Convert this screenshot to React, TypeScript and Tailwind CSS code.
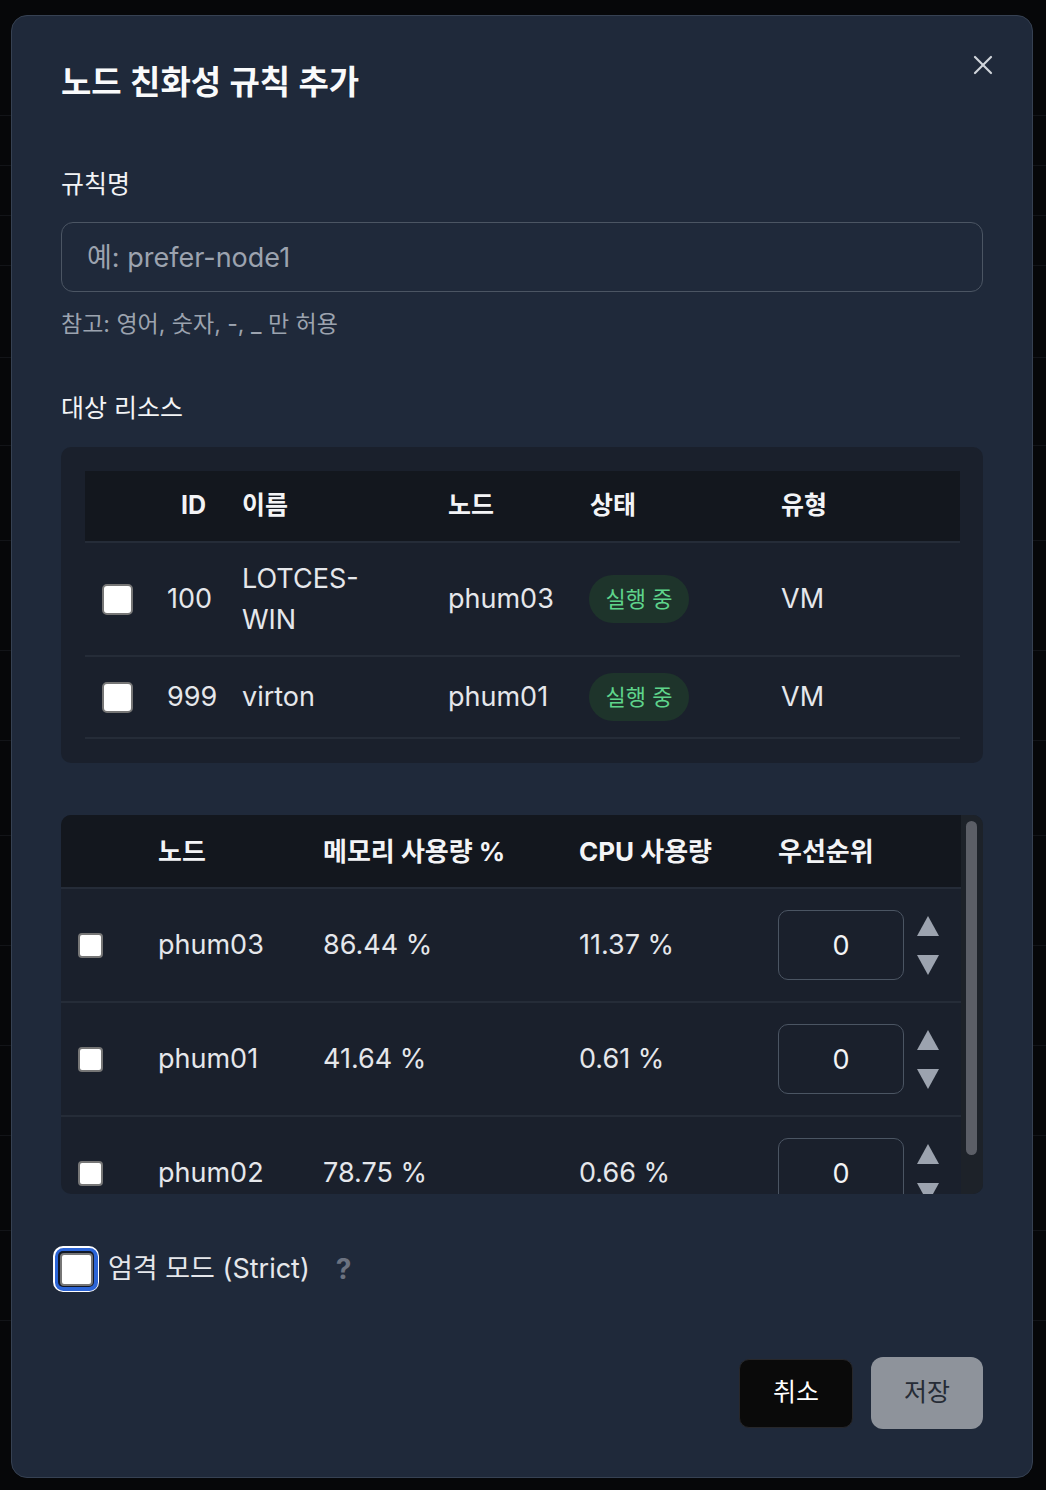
import { useState } from 'react';

const font = { fontFamily: 'Inter, "Noto Sans CJK KR", sans-serif' };

type Resource = { id: string; name: string; node: string; status: string; type: string; tall?: boolean };
type NodeRow = { node: string; mem: string; cpu: string; priority: number };

const resources: Resource[] = [
  { id: '100', name: 'LOTCES-WIN', node: 'phum03', status: '실행 중', type: 'VM', tall: true },
  { id: '999', name: 'virton', node: 'phum01', status: '실행 중', type: 'VM' },
];

const nodes: NodeRow[] = [
  { node: 'phum03', mem: '86.44 %', cpu: '11.37 %', priority: 0 },
  { node: 'phum01', mem: '41.64 %', cpu: '0.61 %', priority: 0 },
  { node: 'phum02', mem: '78.75 %', cpu: '0.66 %', priority: 0 },
];

const Box = ({ size }: { size: 'lg' | 'sm' }) => (
  <span
    className={`block bg-white border-2 border-[#767676] ${
      size === 'lg' ? 'w-[31px] h-[31px] rounded-[5px]' : 'w-[25px] h-[25px] rounded-[4px]'
    }`}
  />
);

const Spinner = () => (
  <div className="flex flex-col gap-[19px] ml-[13px]">
    <svg width="22" height="20" viewBox="0 0 22 20">
      <polygon points="11,0 22,20 0,20" fill="#9ca3af" />
    </svg>
    <svg width="22" height="20" viewBox="0 0 22 20">
      <polygon points="0,0 22,0 11,20" fill="#9ca3af" />
    </svg>
  </div>
);

const App = () => {
  const [ruleName, setRuleName] = useState('');

  return (
    <div className="relative h-[1490px] w-[1046px] bg-[#060709] overflow-hidden" style={font}>
      {/* faint page content behind the overlay */}
      <div className="flex flex-col pt-[115px]">
        {[50, 50, 50, 92, 88, 95, 110, 90, 95, 110, 100, 90, 95, 90, 90].map((h, i) => (
          <div key={i} className="border-t border-[#121418]" style={{ height: h }} />
        ))}
      </div>

      {/* Modal */}
      <div className="absolute left-[11px] top-[15px] w-[1022px] h-[1463px] rounded-[16px] border border-[#364152] bg-[#1f293a] px-[49px] pt-[46px]">
        <button className="absolute right-[39px] top-[39px] text-[#d1d5db]" aria-label="close">
          <svg width="20" height="20" viewBox="0 0 20 20" fill="none" stroke="currentColor" strokeWidth="2.2" strokeLinecap="round">
            <line x1="2" y1="2" x2="18" y2="18" />
            <line x1="18" y1="2" x2="2" y2="18" />
          </svg>
        </button>

        <h2 className="text-[33px] leading-[40px] font-semibold text-[#f9fafb]">노드 친화성 규칙 추가</h2>

        <label className="block mt-[66px] text-[25px] leading-[32px] text-[#f3f4f6]">규칙명</label>
        <input
          value={ruleName}
          onChange={(e) => setRuleName(e.target.value)}
          placeholder="예: prefer-node1"
          className="mt-[22px] block w-full h-[70px] rounded-[12px] border-[1.5px] border-[#4b5563] bg-transparent pl-[25px] text-[27px] text-[#e5e7eb] placeholder:text-[#9ca3af] outline-none"
        />
        <p className="mt-[18px] text-[23px] leading-[28px] text-[#9ca3af]">참고: 영어, 숫자, -, _ 만 허용</p>

        <label className="block mt-[54px] text-[25px] leading-[32px] text-[#f3f4f6]">대상 리소스</label>

        {/* Resources table */}
        <div className="mt-[23px] rounded-[10px] bg-[#1a202c] p-[24px] pr-[23px]">
          <div className="grid grid-cols-[72px_77px_206px_142px_191px_1fr] h-[72px] items-center bg-[#13171e] text-[25px] font-bold text-[#f3f4f6] border-b-2 border-[#252c38]">
            <div />
            <div className="pl-[24px]">ID</div>
            <div className="pl-[8px]">이름</div>
            <div className="pl-[8px]">노드</div>
            <div className="pl-[8px]">상태</div>
            <div className="pl-[8px]">유형</div>
          </div>
          {resources.map((r) => (
            <div
              key={r.id}
              className={`grid grid-cols-[72px_77px_206px_142px_191px_1fr] items-center border-b-2 border-[#252c38] text-[27px] text-[#e5e7eb] ${
                r.tall ? 'h-[114px]' : 'h-[82px]'
              }`}
            >
              <div className="pl-[17px]">
                <Box size="lg" />
              </div>
              <div className="pl-[10px]">{r.id}</div>
              <div className="pl-[8px]">
                <span className="inline-block max-w-[135px] leading-[41px]">{r.name}</span>
              </div>
              <div className="pl-[8px]">{r.node}</div>
              <div className="pl-[7px]">
                <span className="inline-flex items-center justify-center w-[100px] h-[48px] rounded-full bg-[#1e342b] text-[22px] text-[#5ed48b]">
                  {r.status}
                </span>
              </div>
              <div className="pl-[8px]">{r.type}</div>
            </div>
          ))}
        </div>

        {/* Nodes table */}
        <div className="mt-[52px] h-[379px] rounded-[10px] bg-[#1a202c] flex overflow-hidden">
          <div className="flex-1 overflow-hidden">
            <div className="grid grid-cols-[89px_165px_256px_199px_1fr] h-[74px] items-center bg-[#13171e] text-[26px] font-bold text-[#f3f4f6] border-b-2 border-[#252c38]">
              <div />
              <div className="pl-[8px]">노드</div>
              <div className="pl-[8px]">메모리 사용량 %</div>
              <div className="pl-[8px]">CPU 사용량</div>
              <div className="pl-[8px]">우선순위</div>
            </div>
            {nodes.map((n) => (
              <div
                key={n.node}
                className="grid grid-cols-[89px_165px_256px_199px_1fr] h-[114px] items-center border-b-2 border-[#252c38] text-[27px] text-[#e5e7eb]"
              >
                <div className="pl-[17px]">
                  <Box size="sm" />
                </div>
                <div className="pl-[8px]">{n.node}</div>
                <div className="pl-[8px]">{n.mem}</div>
                <div className="pl-[8px]">{n.cpu}</div>
                <div className="pl-[8px] flex items-center">
                  <input
                    readOnly
                    value={n.priority}
                    className="w-[126px] h-[70px] rounded-[10px] border-[1.5px] border-[#4b5563] bg-transparent text-center text-[27px] text-[#f3f4f6] outline-none"
                  />
                  <Spinner />
                </div>
              </div>
            ))}
          </div>
          {/* scrollbar */}
          <div className="w-[22px] bg-[#1d2229] pt-[6px] pl-[5px]">
            <div className="w-[11px] h-[334px] rounded-full bg-[#5b5e66]" />
          </div>
        </div>

        {/* Strict mode */}
        <div className="mt-[52px] flex items-center -ml-[8px]">
          <span className="block rounded-[10px] bg-white p-[1.5px]">
            <span className="block rounded-[8.5px] bg-[#2b64d6] p-[3.5px]">
              <span className="block rounded-[5px] bg-[#111827] p-[1.5px]">
                <span className="block w-[33px] h-[33px] rounded-[4px] bg-white border-2 border-[#767676]" />
              </span>
            </span>
          </span>
          <span className="ml-[9px] text-[27px] text-[#e5e7eb]">엄격 모드 (Strict)</span>
          <span className="ml-[26px] text-[28px] font-bold text-[#6b7280]">?</span>
        </div>

        {/* Actions */}
        <div className="mt-[65px] flex justify-end items-center gap-[18px]">
          <button className="w-[114px] h-[69px] rounded-[10px] border border-[#27272a] bg-[#0a0a0a] text-[25px] text-white">
            취소
          </button>
          <button className="w-[112px] h-[72px] rounded-[12px] bg-[#8e939b] text-[25px] text-[#262c36]">
            저장
          </button>
        </div>
      </div>
    </div>
  );
};

export default App;
